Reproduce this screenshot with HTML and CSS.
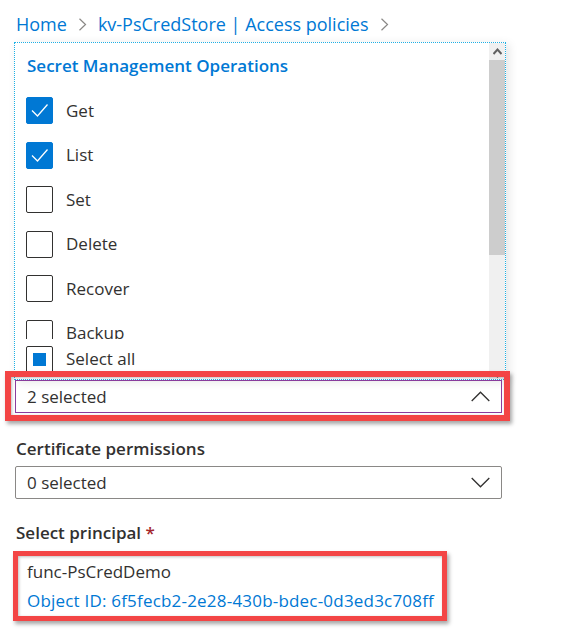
FILE: index.html
```html
<!DOCTYPE html>
<html lang="en">
<head>
<meta charset="utf-8">
<title>Access policies</title>
<link rel="stylesheet" href="styles.css">
</head>
<body>
<div class="page">
  <nav class="crumbs">
    <span class="crumb">Home</span>
    <svg class="crumb-sep" width="9" height="13" viewBox="0 0 9 13"><path d="M1.5 0.8 L7.5 6.5 L1.5 12.2" fill="none" stroke="#8a8886" stroke-width="1.2"/></svg>
    <span class="crumb">kv-PsCredStore | Access policies</span>
    <svg class="crumb-sep" width="9" height="13" viewBox="0 0 9 13"><path d="M1.5 0.8 L7.5 6.5 L1.5 12.2" fill="none" stroke="#8a8886" stroke-width="1.2"/></svg>
  </nav>

  <div class="panel">
    <div class="panel-main">
      <div class="viewport">
        <div class="group-title">Secret Management Operations</div>
        <div class="row"><span class="box checked"><svg width="27" height="27" viewBox="0 0 27 27"><path d="M6 13.5 L11.5 19 L21.5 7.5" fill="none" stroke="#fff" stroke-width="1.3"/></svg></span><span class="label">Get</span></div>
        <div class="row"><span class="box checked"><svg width="27" height="27" viewBox="0 0 27 27"><path d="M6 13.5 L11.5 19 L21.5 7.5" fill="none" stroke="#fff" stroke-width="1.3"/></svg></span><span class="label">List</span></div>
        <div class="row"><span class="box"></span><span class="label">Set</span></div>
        <div class="row"><span class="box"></span><span class="label">Delete</span></div>
        <div class="row"><span class="box"></span><span class="label">Recover</span></div>
        <div class="row"><span class="box"></span><span class="label">Backup</span></div>
      </div>
      <div class="row select-all"><span class="box partial"><span class="partial-fill"></span></span><span class="label">Select all</span></div>
    </div>
    <div class="scrollbar">
      <div class="sb-btn"><svg width="9" height="7" viewBox="0 0 9 7"><path d="M0.5 6 L4.5 1.5 L8.5 6" fill="none" stroke="#606060" stroke-width="2"/></svg></div>
      <div class="sb-thumb"></div>
      <div class="sb-track"></div>
      <div class="sb-btn sb-down"><svg width="9" height="7" viewBox="0 0 9 7"><path d="M0.5 1 L4.5 5.5 L8.5 1" fill="none" stroke="#606060" stroke-width="2"/></svg></div>
    </div>
  </div>

  <div class="dropdown open">
    <span>2 selected</span>
    <svg width="19" height="11" viewBox="0 0 19 11"><path d="M0.7 10 L9.5 1.2 L18.3 10" fill="none" stroke="#323130" stroke-width="1.3"/></svg>
  </div>

  <div class="field-label cert">Certificate permissions</div>
  <div class="dropdown">
    <span>0 selected</span>
    <svg width="19" height="11" viewBox="0 0 19 11"><path d="M0.7 1 L9.5 9.8 L18.3 1" fill="none" stroke="#323130" stroke-width="1.3"/></svg>
  </div>

  <div class="field-label principal">Select principal <span class="req">*</span></div>
  <div class="principal-info">
    <div class="principal-name">func-PsCredDemo</div>
    <div class="principal-id">Object ID: 6f5fecb2-2e28-430b-bdec-0d3ed3c708ff</div>
  </div>

  <div class="highlight hl-dropdown"></div>
  <div class="highlight hl-principal"></div>
</div>
</body>
</html>
```

FILE: styles.css
```css
* { box-sizing: border-box; }
html, body { margin: 0; padding: 0; background: #fff; }
body {
  font-family: "Segoe UI", "Open Sans", "Noto Sans", sans-serif;
  color: #323130;
  width: 579px;
  height: 637px;
  overflow: hidden;
}
.page {
  position: relative;
  padding: 0 0 0 14px;
  width: 579px;
  height: 637px;
}
.crumbs {
  display: flex;
  align-items: center;
  height: 42px;
  padding: 6px 0 0 2px;
  font-size: 18px;
  color: #0078d4;
  gap: 10px;
}
.crumbs .crumb { line-height: 24px; }
.crumb-sep { margin: 0 1px; }

.panel {
  display: grid;
  grid-template-columns: 1fr 16px;
  width: 492px;
  border: 1px dotted #1fb0e4;
  background: #fff;
  box-shadow: 3px 2px 9px rgba(0,0,0,0.10);
}
.panel-main { display: flex; flex-direction: column; }
.viewport { height: 296px; overflow: hidden; }
.group-title {
  height: 45.5px;
  padding: 12px 0 0 12px;
  font-size: 17px;
  line-height: 22px;
  font-weight: 600;
  color: #0078d4;
}
.row {
  display: flex;
  align-items: center;
  height: 44.5px;
  padding-left: 11px;
  gap: 13px;
}
.row.select-all { height: 40px; }
.box {
  width: 27px;
  height: 27px;
  flex: none;
  border: 1px solid #323130;
  border-radius: 2px;
  display: flex;
  align-items: center;
  justify-content: center;
}
.box.checked { background: #0078d4; border-color: #0078d4; }
.box.checked svg { display: block; margin: -1px; }
.partial-fill { width: 13px; height: 13px; background: #0078d4; }
.label { font-size: 17px; line-height: 22px; color: #323130; }

.scrollbar {
  display: flex;
  flex-direction: column;
  background: #f0f0f0;
}
.sb-btn {
  height: 17px;
  display: flex;
  align-items: center;
  justify-content: center;
  flex: none;
}
.sb-btn.sb-down { align-items: flex-end; padding-bottom: 1px; }
.sb-thumb { height: 195px; background: #cdcdcd; flex: none; }
.sb-track { flex: 1; }

.dropdown {
  display: flex;
  align-items: center;
  justify-content: space-between;
  width: 487px;
  height: 33px;
  margin-left: 1px;
  padding: 0 11px 0 11px;
  border: 1px solid #8a8886;
  border-radius: 2px;
  font-size: 17px;
  color: #323130;
}
.dropdown.open { border-color: #8a3d9e; border-radius: 0; }
.dropdown svg { display: block; }
.field-label {
  font-size: 17px;
  font-weight: 600;
  line-height: 22px;
  padding-left: 2px;
}
.field-label.cert { margin-top: 25px; margin-bottom: 6px; }
.field-label.principal { margin-top: 23px; }
.req { color: #a4262c; }
.principal-info { padding: 17px 0 0 13px; font-size: 17px; line-height: 22px; }
.principal-name { color: #323130; }
.principal-id { color: #0078d4; margin-top: 7px; letter-spacing: 0.2px; }

.highlight {
  position: absolute;
  border: 6px solid #f34545;
  box-shadow: 2px 3px 4px rgba(0,0,0,0.35), inset 1px 1px 3px rgba(0,0,0,0.25);
  pointer-events: none;
}
.hl-dropdown { left: 5px; top: 371px; width: 505px; height: 50px; }
.hl-principal { left: 13px; top: 551px; width: 434px; height: 70px; border-width: 5px; }
```
